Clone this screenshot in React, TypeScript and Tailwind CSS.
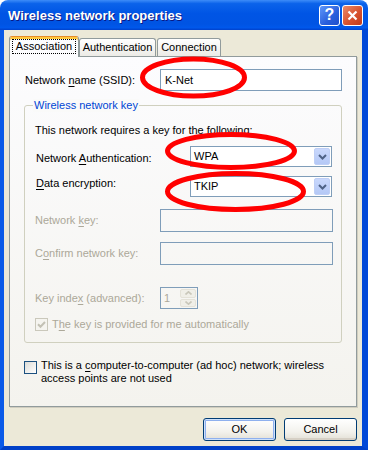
import React from 'react';
import clsx from 'clsx';

// underlined access-key letter
function Mn({ children }: { children: React.ReactNode }) {
  return <span className="underline decoration-1 underline-offset-[2px]">{children}</span>;
}

function Checkbox({ checked = false, disabled = false }: { checked?: boolean; disabled?: boolean }) {
  return (
    <span
      className={clsx(
        'w-[13px] h-[13px] border shrink-0 flex items-center justify-center',
        disabled
          ? 'border-[#cac8bb] bg-[#f5f4ef]'
          : 'border-[#1c5180] bg-[linear-gradient(135deg,#dcdcd7,#ffffff)]'
      )}
    >
      {checked && (
        <svg width="9" height="9" viewBox="0 0 9 9">
          <path d="M1 4.2 L3.5 6.7 L8 2" stroke={disabled ? '#c3c1b4' : '#21a121'} strokeWidth="2" fill="none" />
        </svg>
      )}
    </span>
  );
}

function Combo({ value }: { value: string }) {
  return (
    <div className="w-[142px] h-[21px] border border-[#7f9db9] bg-white flex">
      <span className="flex-1 pl-[3px] flex items-center text-black">{value}</span>
      <span className="w-[16px] m-[1px] rounded-[2px] bg-[linear-gradient(to_bottom,#c9d8fc,#b4c8f6)] border border-[#bfcff6] flex items-center justify-center">
        <svg width="9" height="6" viewBox="0 0 9 6">
          <path d="M1 1 L4.5 4.5 L8 1" stroke="#4d6185" strokeWidth="2" fill="none" />
        </svg>
      </span>
    </div>
  );
}

function XpButton({ label, isDefault = false }: { label: string; isDefault?: boolean }) {
  return (
    <button
      className={clsx(
        'w-[73px] h-[23px] border border-[#003c74] rounded-[3px] bg-[linear-gradient(to_bottom,#ffffff,#f3f2ed_60%,#e3e0d6)] text-black',
        isDefault
          ? 'shadow-[inset_0_0_0_1px_#cee1fb,inset_0_0_0_2px_#8eb0ee]'
          : 'shadow-[inset_0_-2px_0_#d6d0c5]'
      )}
    >
      {label}
    </button>
  );
}

export default function App() {
  return (
    <div className="relative w-[368px] h-[450px] flex flex-col rounded-t-[8px] overflow-hidden font-['Liberation_Sans',Arial,sans-serif] text-[11px] leading-[13px]">
      {/* Title bar */}
      <div className="h-[30px] shrink-0 flex items-center pl-[8px] pr-[5px] bg-[linear-gradient(to_bottom,#3d8cf8_0%,#0b63ea_12%,#0055e5_45%,#0054e3_80%,#0058eb_92%,#0041cc_100%)]">
        <span className="flex-1 text-white font-bold text-[13px] [text-shadow:1px_1px_0_#0a1883]">
          Wireless network properties
        </span>
        <div className="flex gap-[2px]">
          <span className="w-[21px] h-[21px] rounded-[3px] border border-white bg-[linear-gradient(135deg,#5f97fa,#2a5fdc_60%,#1f50cc)] flex items-center justify-center text-white font-bold text-[16px] leading-none">
            ?
          </span>
          <span className="w-[21px] h-[21px] rounded-[3px] border border-white bg-[linear-gradient(135deg,#e98a6a,#d8532f_55%,#c23a1a)] flex items-center justify-center">
            <svg width="11" height="11" viewBox="0 0 11 11">
              <path d="M1.5 1.5 L9.5 9.5 M9.5 1.5 L1.5 9.5" stroke="#fff" strokeWidth="2.2" />
            </svg>
          </span>
        </div>
      </div>

      {/* Body */}
      <div className="flex-1 flex flex-col bg-[#ece9d8] border-l-[4px] border-r-[6px] border-b-[4px] border-l-[#0a5ae8] border-r-[#0048d8] border-b-[#0040c8] pt-[6px] px-[5px]">
        {/* Tabs */}
        <div className="flex items-end h-[20px] relative z-10">
          <div className="w-[70px] h-[21px] -mb-px border-x border-t border-x-[#919b9c] border-t-[#e68b2c] rounded-t-[3px] bg-[#fcfcfe] shadow-[inset_0_2px_0_#ffc73c] px-[2px] pt-[2px]">
            <div className="h-[15px] border border-dotted border-black flex items-center justify-center text-black">
              Association
            </div>
          </div>
          <div className="w-[77px] h-[18px] border border-b-0 border-[#919b9c] rounded-t-[3px] bg-[linear-gradient(to_bottom,#ffffff,#ecebe6)] flex items-center justify-center text-black">
            Authentication
          </div>
          <div className="w-[64px] h-[18px] ml-[1px] border border-b-0 border-[#919b9c] rounded-t-[3px] bg-[linear-gradient(to_bottom,#ffffff,#ecebe6)] flex items-center justify-center text-black">
            Connection
          </div>
        </div>

        {/* Tab page */}
        <div className="h-[351px] border border-[#919b9c] bg-[linear-gradient(to_bottom,#fcfcfe,#f4f3ee)] shadow-[1px_1px_0_#d0cdbf] flex flex-col pl-[14px] text-black">
          <div className="mt-[12px] h-[22px] flex items-center pl-[1px]">
            <span className="w-[135px]">
              Network <Mn>n</Mn>ame (SSID):
            </span>
            <div className="w-[182px] h-[22px] border border-[#7f9db9] bg-white pl-[4px] flex items-center">K-Net</div>
          </div>

          {/* Group box */}
          <div className="relative mt-[14px] w-[318px] border border-[#d0d0bf] rounded-[3px] pl-[10px] pt-[18px] pb-[11px]">
            <span className="absolute left-[8px] -top-[7px] px-[1px] bg-[#fafaf9] text-[#0046d5]">Wireless network key</span>

            <div className="h-[13px]">This network requires a key for the following:</div>

            <div className="mt-[9px] flex items-start">
              <span className="w-[155px] pl-[1px] mt-[6px]">
                Network <Mn>A</Mn>uthentication:
              </span>
              <Combo value="WPA" />
            </div>
            <div className="mt-[9px] flex items-start">
              <span className="w-[155px] pl-[1px] mt-[1px]">
                <Mn>D</Mn>ata encryption:
              </span>
              <Combo value="TKIP" />
            </div>

            <div className="mt-[12px] flex items-center text-[#aca899]">
              <span className="w-[125px]">
                Network <Mn>k</Mn>ey:
              </span>
              <div className="w-[173px] h-[23px] border border-[#7f9db9]" />
            </div>
            <div className="mt-[10px] flex items-center text-[#aca899]">
              <span className="w-[125px]">
                C<Mn>o</Mn>nfirm network key:
              </span>
              <div className="w-[173px] h-[23px] border border-[#7f9db9]" />
            </div>

            <div className="mt-[22px] flex items-center text-[#aca899]">
              <span className="w-[125px]">
                Key inde<Mn>x</Mn> (advanced):
              </span>
              <div className="w-[38px] h-[22px] border border-[#7f9db9] flex">
                <span className="flex-1 pl-[3px] flex items-center">1</span>
                <div className="w-[16px] m-[1px] flex flex-col gap-[1px]">
                  <span className="flex-1 rounded-[2px] bg-[#f0efe8] border border-[#e4e2d8] flex items-center justify-center">
                    <svg width="7" height="4" viewBox="0 0 7 4">
                      <path d="M0.5 3.5 L3.5 0.8 L6.5 3.5" stroke="#c9c7ba" strokeWidth="1.6" fill="none" />
                    </svg>
                  </span>
                  <span className="flex-1 rounded-[2px] bg-[#f0efe8] border border-[#e4e2d8] flex items-center justify-center">
                    <svg width="7" height="4" viewBox="0 0 7 4">
                      <path d="M0.5 0.5 L3.5 3.2 L6.5 0.5" stroke="#c9c7ba" strokeWidth="1.6" fill="none" />
                    </svg>
                  </span>
                </div>
              </div>
            </div>

            <div className="mt-[9px] flex items-center gap-[4px] text-[#aca899] h-[13px]">
              <Checkbox checked disabled />
              <span>
                T<Mn>h</Mn>e key is provided for me automatically
              </span>
            </div>
          </div>

          <div className="mt-[18px] flex items-start gap-[4px]">
            <Checkbox />
            <span className="w-[301px] -mt-[2px]">
              This is a <Mn>c</Mn>omputer-to-computer (ad hoc) network; wireless access points are not used
            </span>
          </div>
        </div>

        {/* Buttons */}
        <div className="mt-[11px] flex justify-end gap-[8px]">
          <XpButton label="OK" isDefault />
          <XpButton label="Cancel" />
        </div>
      </div>

      {/* Red annotation marks */}
      <svg className="absolute inset-0 pointer-events-none" width="368" height="450" viewBox="0 0 368 450">
        <ellipse cx="193.5" cy="77.5" rx="51" ry="18.5" fill="none" stroke="#ff0000" strokeWidth="5" />
        <ellipse cx="231" cy="151" rx="63.5" ry="16.5" fill="none" stroke="#ff0000" strokeWidth="5" />
        <ellipse cx="235.5" cy="191.5" rx="68" ry="18" fill="none" stroke="#ff0000" strokeWidth="5" />
      </svg>
    </div>
  );
}
